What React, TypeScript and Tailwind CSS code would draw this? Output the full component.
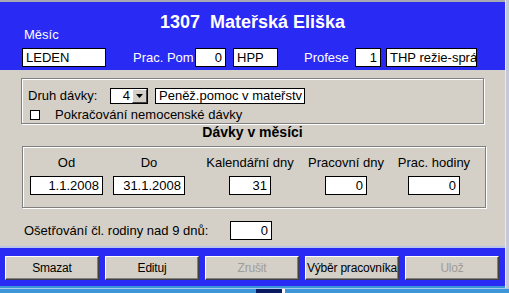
const font = { fontFamily: '"Liberation Sans", Arial, sans-serif' };

const Box = ({ value, w, right }: { value: string; w: string; right?: boolean }) => (
  <div
    className={`${w} h-[19px] bg-white border border-black text-black text-[13px] leading-[17px] px-[3px] overflow-hidden whitespace-nowrap ${
      right ? "text-right" : "text-left"
    }`}
  >
    {value}
  </div>
);

const Button = ({ label, disabled }: { label: string; disabled?: boolean }) => (
  <button
    className={`w-[94px] h-[24px] bg-[#d4d0c8] border border-t-white border-l-white border-r-[#404040] border-b-[#404040] shadow-[inset_-1px_-1px_0_#808080] text-[12px] leading-[20px] whitespace-nowrap tracking-[-0.2px] ${
      disabled ? "text-[#a09c98]" : "text-black"
    }`}
  >
    {label}
  </button>
);

const Column = ({ label, value, w, boxW }: { label: string; value: string; w: string; boxW: string }) => (
  <div className={`${w} flex flex-col items-center`}>
    <div className="h-[16px] leading-[16px] text-[13px] whitespace-nowrap">{label}</div>
    <div className="mt-[5px]">
      <Box value={value} w={boxW} right />
    </div>
  </div>
);

export default function App() {
  return (
    <div className="w-[509px] h-[293px] flex flex-col overflow-hidden bg-[#3c96d8]" style={font}>
      <div className="flex h-[288px]">
        <div className="w-[505px] flex flex-col">
          {/* header */}
          <div className="h-[2px] bg-[#a8a8b0]" />
          <div className="h-[68px] bg-[#2a2af5] text-white pt-[10px]">
            <div className="h-[15px] text-center font-bold text-[18px] leading-[20px] whitespace-pre">
              {"1307  Mateřská Eliška"}
            </div>
            <div className="h-[15px] pl-[24px] text-[13px] leading-[15px]">Měsíc</div>
            <div className="mt-[6px] flex items-center pl-[22px] text-[13px]">
              <Box value="LEDEN" w="w-[84px]" />
              <span className="ml-[27px] w-[62px]">Prac. Pom</span>
              <Box value="0" w="w-[31px]" right />
              <div className="ml-[7px]">
                <Box value="HPP" w="w-[45px]" />
              </div>
              <span className="ml-[26px] w-[51px]">Profese</span>
              <Box value="1" w="w-[26px]" right />
              <div className="ml-[5px]">
                <Box value="THP režie-sprá" w="w-[91px]" />
              </div>
            </div>
          </div>

          {/* body */}
          <div className="h-[178px] bg-[#d4d0c8] text-black text-[13px] border-b-2 border-[#b8c4e8]">
            <div className="mt-[8px] ml-[21px] w-[463px] h-[46px] border border-[#808080] shadow-[inset_1px_1px_0_#fff,1px_1px_0_#fff] pl-[6px] pt-[8px]">
              <div className="flex items-center h-[17px]">
                <span className="w-[82px]">Druh dávky:</span>
                <div className="w-[38px] h-[16px] bg-white border border-black flex">
                  <div className="flex-1 text-right pr-[2px] leading-[14px]">4</div>
                  <div className="w-[15px] h-full bg-[#d4d0c8] border border-t-white border-l-white border-r-[#404040] border-b-[#404040] flex items-center justify-center">
                    <svg width="7" height="4" viewBox="0 0 7 4">
                      <path d="M0 0h7L3.5 4z" fill="#000" />
                    </svg>
                  </div>
                </div>
                <div className="ml-[7px] w-[150px] h-[16px] bg-white border border-black px-[3px] leading-[14px] overflow-hidden whitespace-nowrap">
                  Peněž.pomoc v mateřstv
                </div>
              </div>
              <div className="flex items-center h-[15px] mt-[3px] pl-[2px]">
                <div className="w-[10px] h-[10px] bg-white border border-black" />
                <span className="ml-[15px]">Pokračování nemocenské dávky</span>
              </div>
            </div>

            <div className="h-[15px] mt-[1px] text-center font-bold text-[14px] leading-[15px]">Dávky v měsíci</div>

            <div className="mt-[6px] ml-[22px] w-[464px] h-[62px] border border-[#808080] shadow-[inset_1px_1px_0_#fff,1px_1px_0_#fff] pl-[7px] pt-[8px] flex">
              <Column label="Od" value="1.1.2008" w="w-[73px]" boxW="w-[73px]" />
              <div className="ml-[10px]">
                <Column label="Do" value="31.1.2008" w="w-[72px]" boxW="w-[72px]" />
              </div>
              <div className="ml-[15px]">
                <Column label="Kalendářní dny" value="31" w="w-[100px]" boxW="w-[42px]" />
              </div>
              <Column label="Pracovní dny" value="0" w="w-[92px]" boxW="w-[42px]" />
              <Column label="Prac. hodiny" value="0" w="w-[84px]" boxW="w-[52px]" />
            </div>

            <div className="mt-[13px] flex items-center pl-[24px]">
              <span className="w-[206px] whitespace-nowrap">Ošetřování čl. rodiny nad 9 dnů:</span>
              <Box value="0" w="w-[42px]" right />
            </div>
          </div>

          {/* buttons */}
          <div className="h-[38px] bg-[#2a2af5] flex gap-[6px] pl-[5px] pt-[8px]">
            <Button label="Smazat" />
            <Button label="Edituj" />
            <Button label="Zrušit" disabled />
            <Button label="Výběr pracovníka" />
            <Button label="Ulož" disabled />
          </div>
        </div>
        <div className="flex-1 bg-[#c4c8dc] border-l border-[#e8e8f0]" />
      </div>
      <div className="h-[1px] bg-[#a8c8f0]" />
      <div className="flex-1 flex">
        <div className="ml-[256px] w-[26px] bg-[#0a1a60]" />
        <div className="w-[3px] bg-white" />
      </div>
    </div>
  );
}
